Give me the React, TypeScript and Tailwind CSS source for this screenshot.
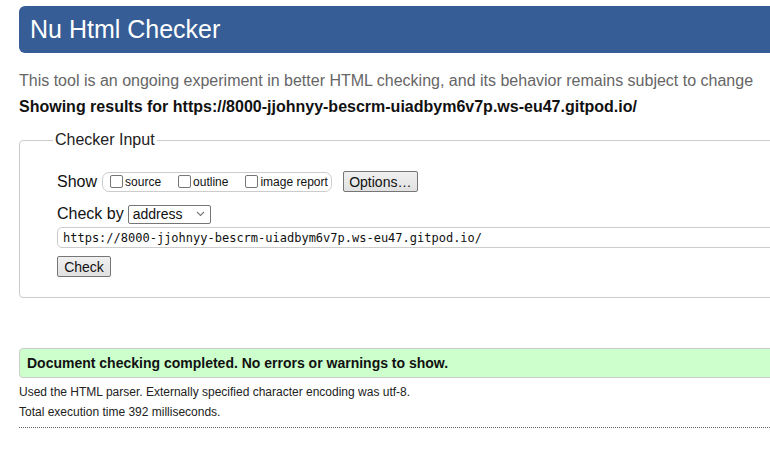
import React from 'react';

const sans = { fontFamily: '"Liberation Sans", Arial, sans-serif' };

function Box({ label }: { label: string }) {
  return (
    <label className="flex items-center">
      <span className="inline-block w-[13px] h-[13px] border border-[#767676] rounded-[2px] bg-white mr-[2px]" />
      <span className="text-[12px] leading-[14px] text-[#111]">{label}</span>
    </label>
  );
}

export default function App() {
  return (
    <div className="w-[770px] h-[456px] overflow-hidden bg-white" style={sans}>
      <div className="w-[1000px] pl-[19px] text-[#111]">
        {/* Title bar */}
        <h1 className="mt-[6px] h-[47px] bg-[#365d95] rounded-l-[6px] flex items-center pl-[11px] text-white text-[25px] leading-none">
          Nu Html Checker
        </h1>

        <p className="mt-[18px] text-[16px] leading-[20px] text-[#666]">
          This tool is an ongoing experiment in better HTML checking, and its behavior remains subject to change
        </p>
        <p className="mt-[6px] text-[16px] leading-[20px] font-bold text-[#111]">
          Showing results for https://8000-jjohnyy-bescrm-uiadbym6v7p.ws-eu47.gitpod.io/
        </p>

        {/* Checker input */}
        <fieldset className="mt-[13px] border border-[#ccc] rounded-[4px] pl-[33px] pb-[20px]">
          <legend className="px-[2px] text-[16px] leading-[20px] text-[#222]">Checker Input</legend>
          <div className="pl-[4px]">
            <div className="mt-[21px] h-[21px] flex items-center">
              <span className="text-[16px] leading-[20px] mr-[5px]">Show</span>
              <div className="h-[20px] flex items-center border border-[#ccc] rounded-[7px] pl-[7px] pr-[3px] gap-[17px]">
                <Box label="source" />
                <Box label="outline" />
                <Box label="image report" />
              </div>
              <button className="ml-[11px] h-[21px] w-[75px] border border-[#767676] rounded-[2px] bg-gradient-to-b from-[#f0f0f0] to-[#e1e1e1] text-[14px] leading-[16px] text-[#111]">
                Options…
              </button>
            </div>

            <div className="mt-[12px] h-[20px] flex items-center">
              <span className="text-[16px] leading-[20px] mr-[4px]">Check by</span>
              <div className="h-[19px] w-[83px] border border-[#767676] rounded-[2px] flex items-center pl-[4px] pr-[5px] justify-between">
                <span className="text-[14px] leading-[16px]">address</span>
                <svg width="9" height="6" viewBox="0 0 9 6" fill="none">
                  <path d="M1 1 L4.5 4.5 L8 1" stroke="#777" strokeWidth="1.1" />
                </svg>
              </div>
            </div>

            <div className="mt-[3px] h-[21px] border border-[#ccc] rounded-l-[5px] flex items-center pl-[5px]">
              <span className="text-[12px] leading-[14px] text-[#111]" style={{ fontFamily: '"DejaVu Sans Mono", "Liberation Mono", monospace' }}>
                https://8000-jjohnyy-bescrm-uiadbym6v7p.ws-eu47.gitpod.io/
              </span>
            </div>

            <button className="mt-[8px] h-[21px] w-[54px] border border-[#767676] rounded-[2px] bg-gradient-to-b from-[#f0f0f0] to-[#e1e1e1] text-[14px] leading-[16px] text-[#111] block">
              Check
            </button>
          </div>
        </fieldset>

        {/* Result */}
        <div className="mt-[50px] h-[30px] bg-[#ccffcc] border border-[#ccc] rounded-l-[4px] flex items-center pl-[7px]">
          <span className="text-[14px] leading-[16px] font-bold text-[#111]">
            Document checking completed. No errors or warnings to show.
          </span>
        </div>
        <p className="mt-[4px] text-[12px] leading-[20px] text-[#222]">
          Used the HTML parser. Externally specified character encoding was utf-8.
        </p>
        <p className="text-[12px] leading-[20px] text-[#222]">Total execution time 392 milliseconds.</p>
        <div className="mt-[5px] border-t border-dotted border-[#666]" />
      </div>
    </div>
  );
}
